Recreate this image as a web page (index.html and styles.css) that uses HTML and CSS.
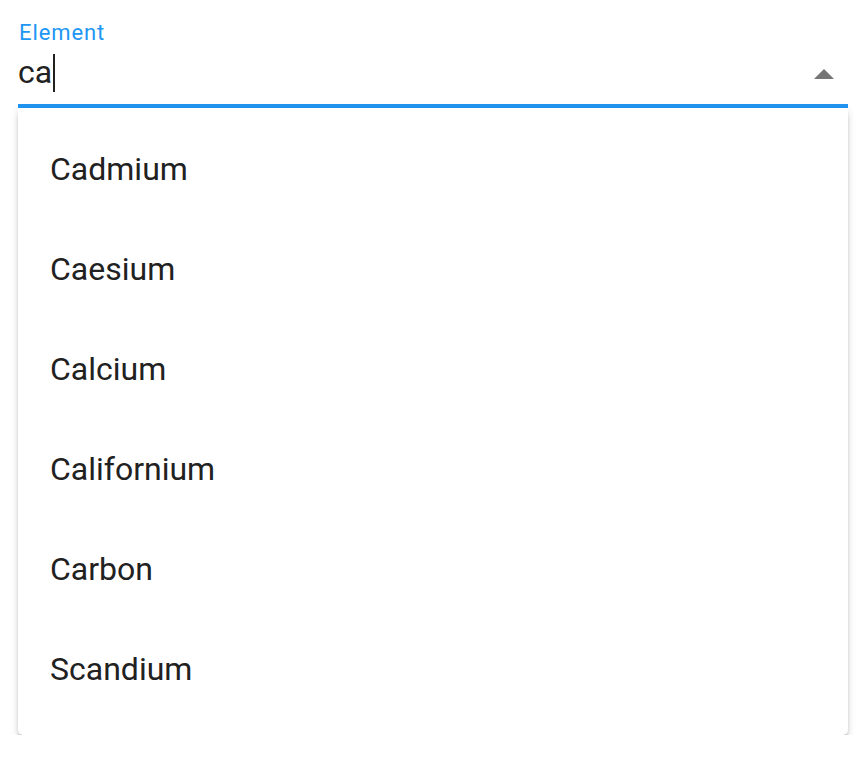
FILE: index.html
```html
<!DOCTYPE html>
<html>
<head>
<meta charset="utf-8">
<link rel="stylesheet" href="styles.css">
</head>
<body>
<div class="field">
  <div class="label">Element</div>
  <div class="input-row">
    <span class="value">ca</span><span class="caret"></span>
    <svg class="arrow" width="20" height="10" viewBox="0 0 20 10"><path d="M0 10 L10 0 L20 10 Z" fill="#757575"/></svg>
  </div>
  <div class="underline"></div>
  <div class="menu">
    <div class="item">Cadmium</div>
    <div class="item">Caesium</div>
    <div class="item">Calcium</div>
    <div class="item">Californium</div>
    <div class="item">Carbon</div>
    <div class="item">Scandium</div>
  </div>
</div>
</body>
</html>
```
FILE: styles.css
```css
html, body {
  margin: 0;
  padding: 0;
  background: #ffffff;
}
body {
  font-family: Roboto, "Liberation Sans", sans-serif;
}
.field {
  margin: 0 20px 0 18px;
  padding-top: 19px;
}
.label {
  color: #2196f3;
  font-size: 22px;
  letter-spacing: 0.9px;
  line-height: 28px;
  padding-left: 1px;
}
.input-row {
  display: flex;
  align-items: center;
  padding-top: 3px;
  padding-bottom: 8px;
  box-sizing: border-box;
  height: 57px;
}
.value {
  font-size: 32px;
  color: #212121;
  line-height: 37.5px;
}
.caret {
  width: 2px;
  height: 37.5px;
  background: #212121;
  margin-left: 1px;
}
.arrow {
  margin-left: auto;
  margin-right: 14px;
  margin-top: 2px;
}
.underline {
  height: 4px;
  background: #2196f3;
}
.menu {
  background: #ffffff;
  border-radius: 0 0 5px 5px;
  box-shadow: 0 5px 5px -2px rgba(0,0,0,0.35), 0 2px 8px rgba(0,0,0,0.12);
  padding: 11px 0 16px;
}
.item {
  height: 100px;
  display: flex;
  align-items: center;
  padding-left: 32px;
  font-size: 32px;
  color: #212121;
}
```
